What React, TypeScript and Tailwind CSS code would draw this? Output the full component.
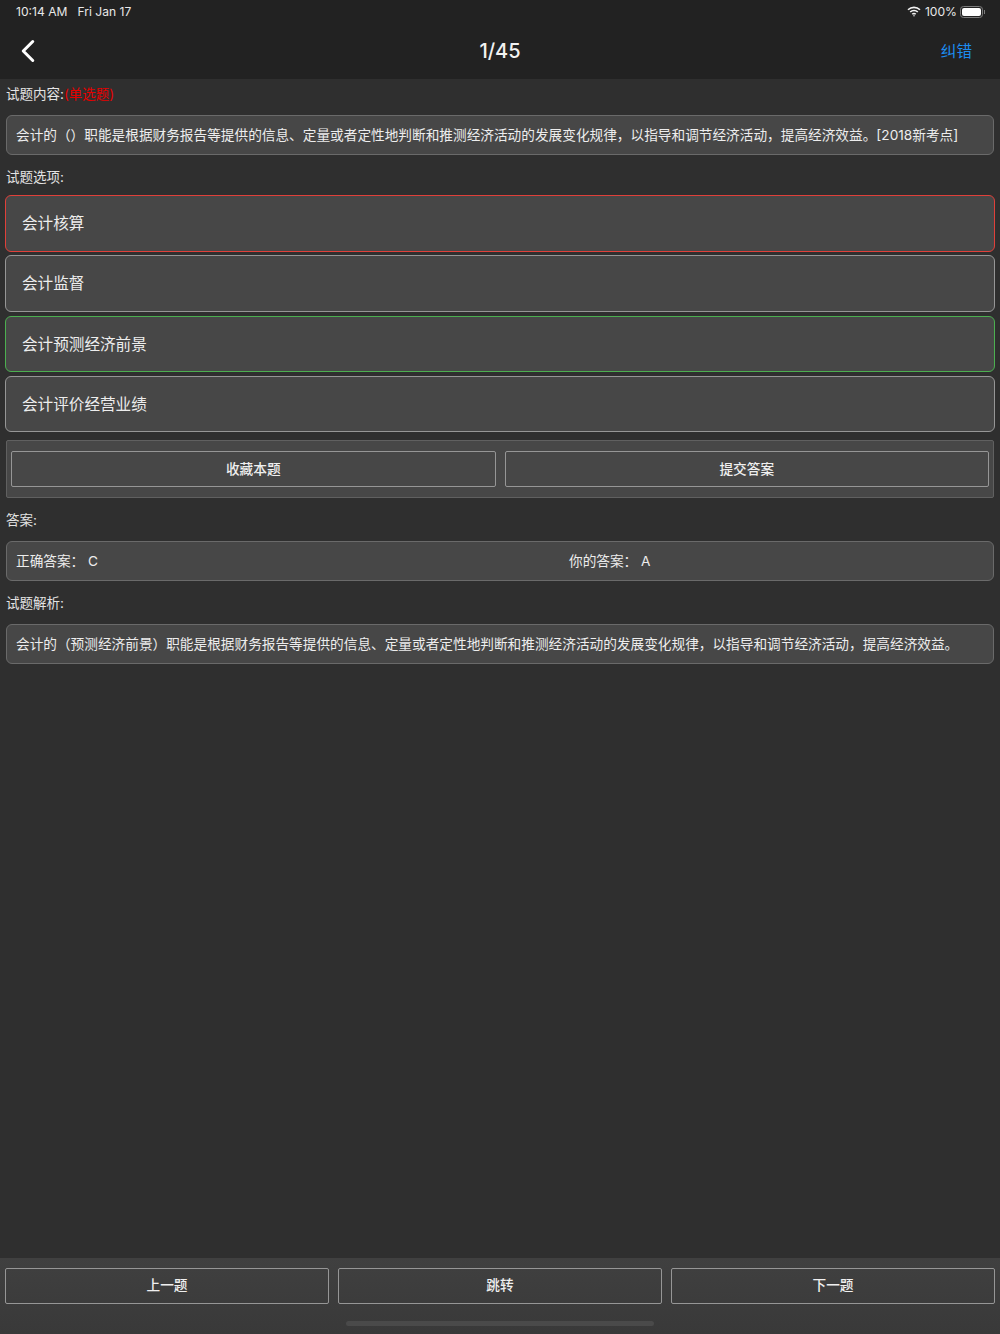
import { ChevronLeft } from 'lucide-react'

const cjk = "font-['Inter','Noto_Sans_CJK_SC',sans-serif]"

function Label({ children }: { children: React.ReactNode }) {
  return <div className="px-[6px] text-[13.5px] leading-[18px] text-[#e4e4e4]">{children}</div>
}

function TextBox({ children }: { children: React.ReactNode }) {
  return (
    <div className="mx-[6px] flex h-[40px] shrink-0 items-center rounded-[6px] border border-[#6a6a6a] bg-[#474747] px-[9px] text-[13.67px] whitespace-nowrap text-[#ededed]">
      {children}
    </div>
  )
}

function Option({ text, border }: { text: string; border: string }) {
  return (
    <div className={`mx-[5px] flex h-[56.5px] items-center rounded-[6px] border bg-[#474747] pt-[1px] pl-[16px] text-[15.6px] text-[#ededed] ${border}`}>
      {text}
    </div>
  )
}

function ActionButton({ text }: { text: string }) {
  return (
    <button className="flex h-[36px] flex-1 items-center justify-center rounded-[2px] border border-[#969696] text-[13.67px] font-medium text-[#efefef]">
      {text}
    </button>
  )
}

export default function App() {
  return (
    <div className={`flex h-screen w-full flex-col overflow-hidden bg-[#2f2f2f] ${cjk}`}>
      <header className="h-[79px] shrink-0 bg-[#222222]">
        <div className="flex h-[24px] items-center justify-between pr-[15px] pl-[16px] text-[12.1px] text-[#e8e8e8]">
          <div className="flex gap-[10px]">
            <span>10:14 AM</span>
            <span>Fri Jan 17</span>
          </div>
          <div className="flex items-center gap-[3px]">
            <svg width="14" height="11" viewBox="0 0 14 11" fill="none" stroke="#f2f2f2" strokeWidth="1.6">
              <path d="M1 3.8a8.6 8.6 0 0 1 12 0" />
              <path d="M3.2 6a5.4 5.4 0 0 1 7.6 0" />
              <path d="M5.3 8.2a2.4 2.4 0 0 1 3.4 0" />
              <circle cx="7" cy="9.8" r="0.7" fill="#f2f2f2" stroke="none" />
            </svg>
            <span className="ml-[1px]">100%</span>
            <div className="flex items-center gap-[1px]">
              <div className="h-[12px] w-[23px] rounded-[3.5px] border border-[#7c7c7c] p-[1px]">
                <div className="h-full w-full rounded-[2px] bg-white" />
              </div>
              <div className="h-[4px] w-[1px] bg-[#7c7c7c]" />
            </div>
          </div>
        </div>
        <div className="relative flex h-[54px] items-center justify-between">
          <ChevronLeft className="ml-[9px] text-white" size={38} strokeWidth={1.9} />
          <span className="absolute left-1/2 -translate-x-1/2 text-[20px] font-medium text-[#f2f2f2]">1/45</span>
          <span className="mt-[2px] mr-[28px] text-[15.6px] text-[#1c8cf0]">纠错</span>
        </div>
      </header>

      <main className="flex flex-1 flex-col">
        <div className="pt-[6px] pb-[12px]">
          <Label>
            试题内容:<span className="text-[#e60000]">(单选题)</span>
          </Label>
        </div>
        <TextBox>会计的（）职能是根据财务报告等提供的信息、定量或者定性地判断和推测经济活动的发展变化规律，以指导和调节经济活动，提高经济效益。[2018新考点]</TextBox>
        <div className="pt-[13px] pb-[9px]">
          <Label>试题选项:</Label>
        </div>
        <div className="flex flex-col gap-[3.83px]">
          <Option text="会计核算" border="border-[#e0403a]" />
          <Option text="会计监督" border="border-[#969696]" />
          <Option text="会计预测经济前景" border="border-[#4caf50]" />
          <Option text="会计评价经营业绩" border="border-[#969696]" />
        </div>
        <div className="mx-[6px] mt-[8px] flex h-[57.5px] items-center gap-[9px] rounded-[2px] border border-[#606060] bg-[#474747] px-[4px]">
          <ActionButton text="收藏本题" />
          <ActionButton text="提交答案" />
        </div>
        <div className="pt-[13px] pb-[12.3px]">
          <Label>答案:</Label>
        </div>
        <TextBox>
          <div className="w-[553px]">正确答案：&nbsp;C</div>
          <div>你的答案：&nbsp;A</div>
        </TextBox>
        <div className="pt-[12.7px] pb-[12px]">
          <Label>试题解析:</Label>
        </div>
        <TextBox>会计的（预测经济前景）职能是根据财务报告等提供的信息、定量或者定性地判断和推测经济活动的发展变化规律，以指导和调节经济活动，提高经济效益。</TextBox>
      </main>

      <footer className="relative h-[76.5px] shrink-0 bg-gradient-to-b from-[#404040] to-[#393939] px-[5px] pt-[10px]">
        <div className="flex gap-[9px]">
          <ActionButton text="上一题" />
          <ActionButton text="跳转" />
          <ActionButton text="下一题" />
        </div>
        <div className="absolute bottom-[8px] left-1/2 h-[5px] w-[308px] -translate-x-1/2 rounded-full bg-[#4a4a4a]" />
      </footer>
    </div>
  )
}
